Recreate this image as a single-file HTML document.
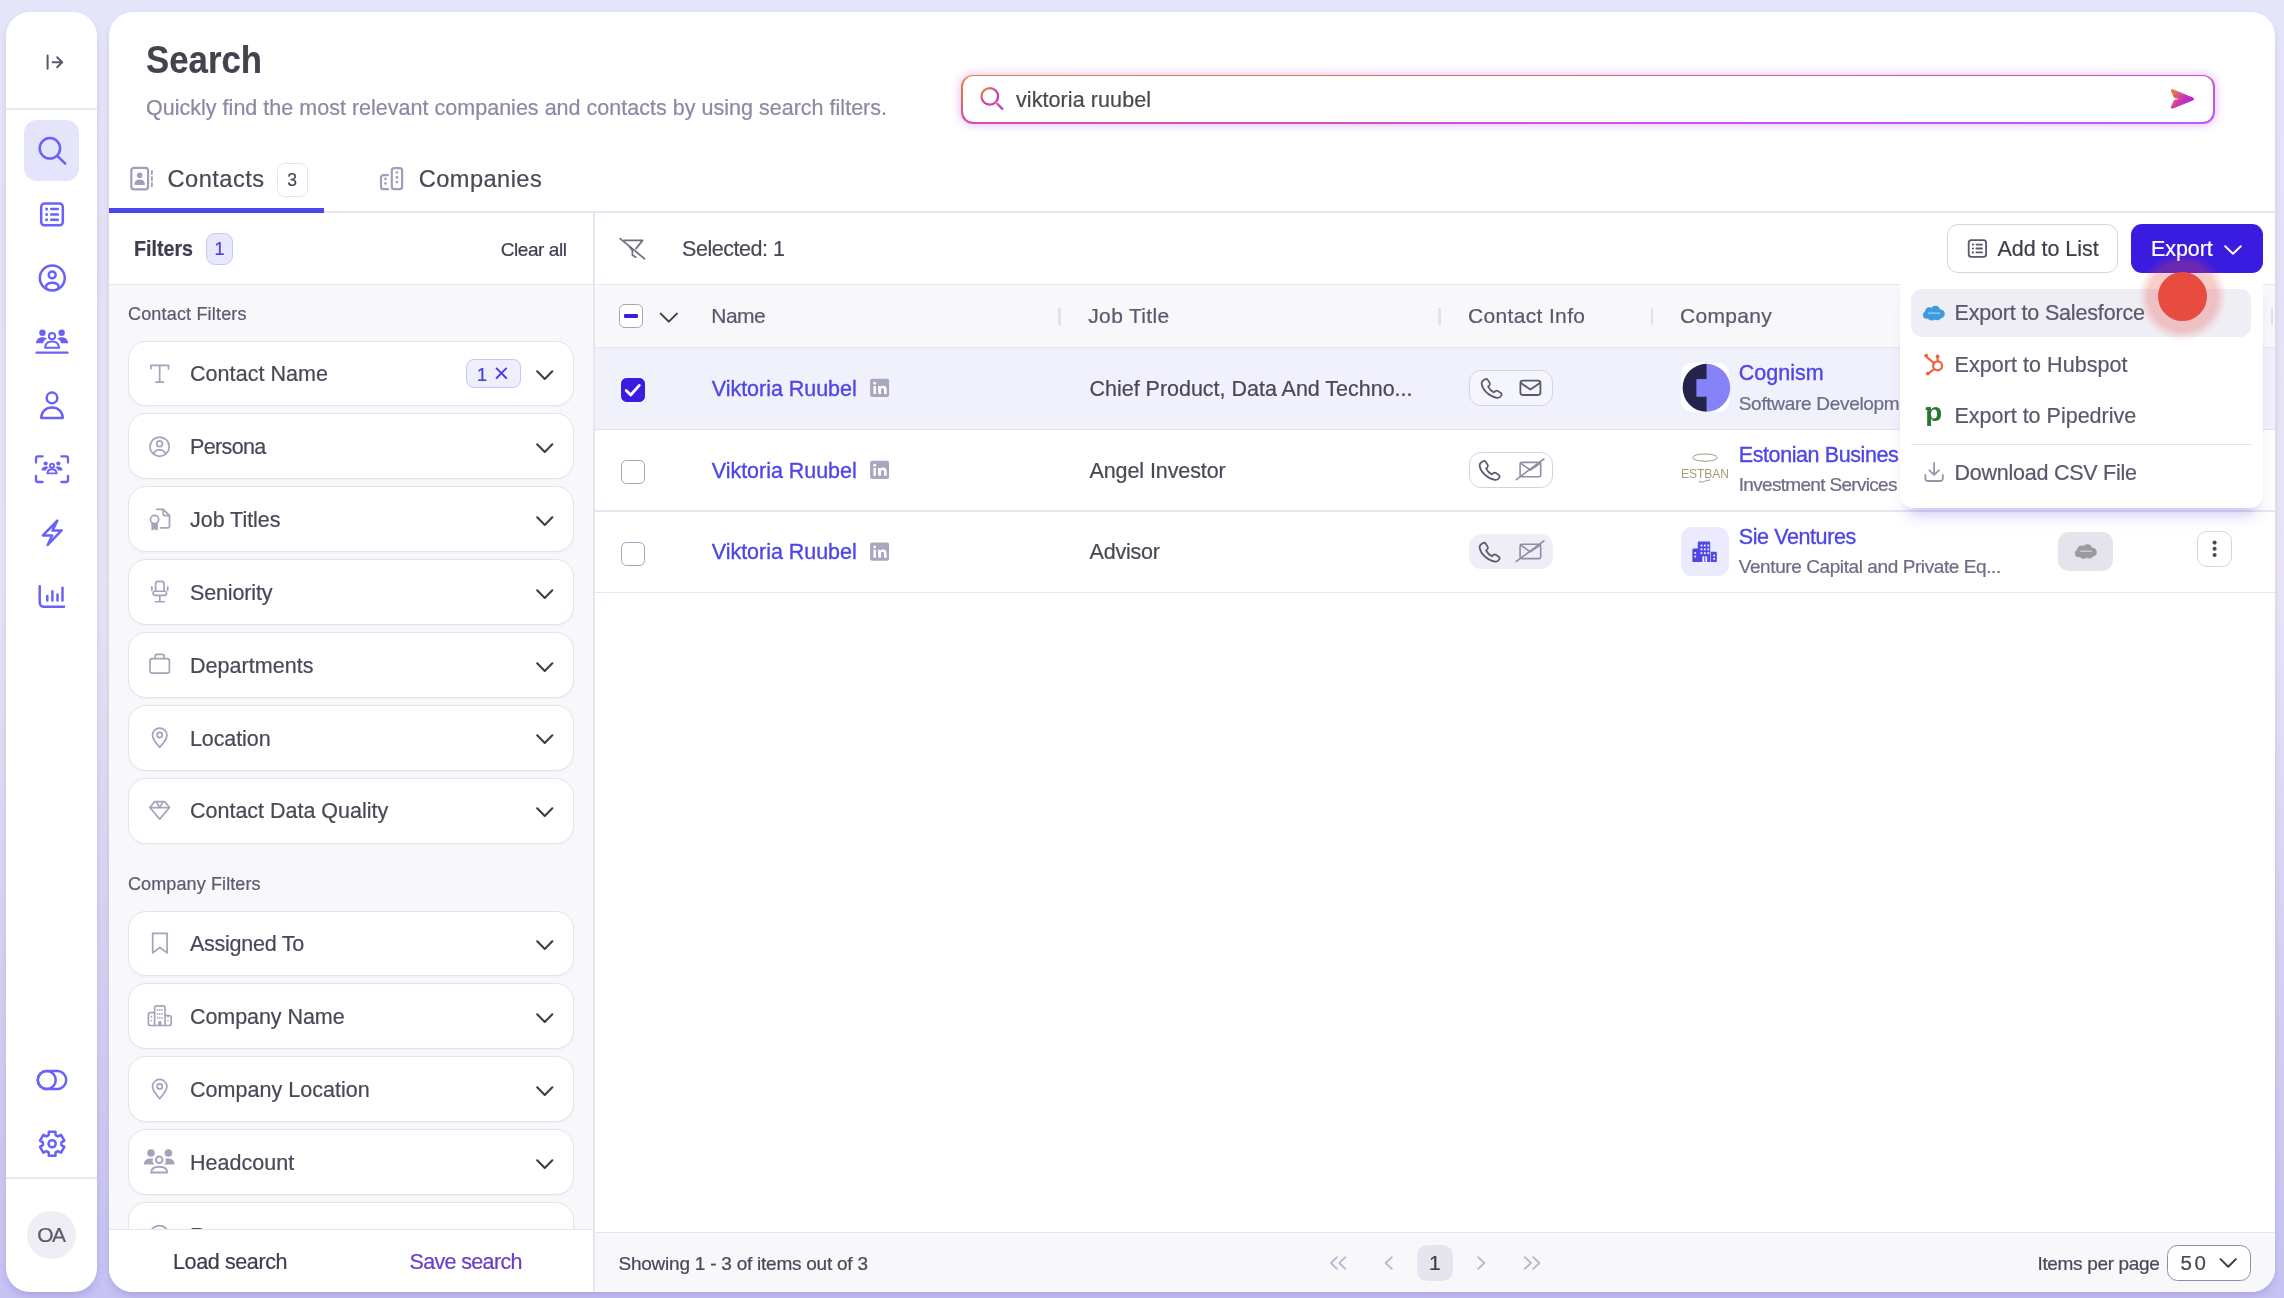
<!DOCTYPE html>
<html lang="en">
<head>
<meta charset="utf-8">
<title>Search</title>
<style>
*{box-sizing:border-box;margin:0;padding:0}
html,body{width:2284px;height:1298px;overflow:hidden}
body{position:relative;font-family:"Liberation Sans",sans-serif;
  background:linear-gradient(180deg,#e5e5f9 0%,#e6e3f4 20%,#eae5f5 45%,#dcd8f3 64%,#d0ccf1 83%,#c6c2f2 100%);}
.a{position:absolute}
.t{position:absolute;white-space:nowrap;line-height:1;z-index:5;-webkit-text-stroke:.22px currentColor}
.side{left:6px;top:11.5px;width:91px;height:1280.5px;background:#fff;border-radius:24px;box-shadow:0 5px 9px -2px rgba(70,60,160,.24)}
.main{left:109px;top:11.5px;width:2166.3px;height:1280.5px;background:#fff;border-radius:24px;overflow:hidden;box-shadow:0 5px 9px -2px rgba(70,60,160,.24)}
.hl{position:absolute;height:1.5px;background:#e6e5f0}
.vl{position:absolute;width:1.5px;background:#e6e5f0}
.card{position:absolute;left:128.25px;width:446px;height:65.75px;background:#fff;border:1.5px solid #e3e2ef;border-radius:18px;box-shadow:0 1px 2px rgba(120,110,200,.06)}
.ico{position:absolute;overflow:visible}
.chev{position:absolute;width:17.5px;height:10.75px}
.cb{position:absolute;width:24px;height:24px;border-radius:5.5px;border:1.6px solid #a3a1bd;background:#fff}
.pill{position:absolute;left:1468.75px;width:84.5px;height:35.5px;border-radius:12px;border:1.6px solid #d3d1e5}
.sep{position:absolute;width:2.5px;height:17.5px;top:307.5px;background:#e2e1ec;border-radius:1px}
svg{display:block}
</style>
</head>
<body>

<!-- ===== Sidebar ===== -->
<div class="a side"></div>
<div class="hl" style="left:6px;width:91px;top:108px;background:#e9e9f2"></div>
<div class="hl" style="left:6px;width:91px;top:1177px;background:#e9e9f2"></div>
<div class="a" style="left:24.3px;top:120.2px;width:54.7px;height:60.5px;border-radius:13px;background:#e4e4fb"></div>
<div class="a" style="left:27.2px;top:1210.6px;width:48.6px;height:48.2px;border-radius:50%;background:#efeef5"></div>
<svg class="a" style="left:0;top:0;z-index:2" width="110" height="1298" viewBox="0 0 110 1298"><g fill="none" stroke="#5a586c" stroke-width="2" stroke-linecap="round" stroke-linejoin="round"><path d="M47.6 55.6V68.8M52.6 62.2H62.2M57.2 57.2l5 5-5 5"/></g><g fill="none" stroke="#6a62f6" stroke-width="2.5" stroke-linecap="round" stroke-linejoin="round"><circle cx="49.9" cy="148.3" r="10.2"/><path d="M57.6 156.1L65.2 163.6"/><rect x="41.2" y="203.6" width="21.6" height="21.6" rx="3.2"/><path d="M51.2 209h6.6M51.2 214.4h6.6M51.2 219.8h6.6"/><clipPath id="pc"><circle cx="52.3" cy="278" r="13"/></clipPath><circle cx="52.3" cy="278" r="12.45"/><circle cx="52.2" cy="274.9" r="3.45"/><ellipse cx="52.3" cy="286.700" rx="6.400" ry="4" clip-path="url(#pc)"/><circle cx="52" cy="397.9" r="5.3"/><path d="M41.3 418c0-6.6 4.7-10.4 10.7-10.4s10.7 3.8 10.7 10.4z"/><path d="M57.3 520.6L42.9 535.4h9.2l-4.4 9.6 13.9-14.6h-9.1z"/><path d="M39.7 586.2v16.400a4.200 4.200 0 0 0 4.200 4.200h20.200"/><path d="M47.300 596v4.400M52.400 591.200v9.200M57.500 594.600v5.800M62.500 587.800v12.600"/><rect x="37.750" y="1070.950" width="28.500" height="18" rx="9"/><circle cx="46.750" cy="1079.950" r="9"/><path d="M48.80 1131.66 L55.50 1131.66 L55.58 1135.05 L57.97 1136.43 L60.95 1134.80 L64.30 1140.61 L61.40 1142.37 L61.40 1145.13 L64.30 1146.89 L60.95 1152.70 L57.97 1151.07 L55.58 1152.45 L55.50 1155.84 L48.80 1155.84 L48.72 1152.45 L46.33 1151.07 L43.35 1152.70 L40.00 1146.89 L42.90 1145.13 L42.90 1142.37 L40.00 1140.61 L43.35 1134.80 L46.33 1136.43 L48.72 1135.05Z"/><circle cx="52.15" cy="1143.75" r="3.6"/></g><g fill="#6a62f6"><circle cx="46.6" cy="209" r="1.5"/><circle cx="46.6" cy="214.4" r="1.5"/><circle cx="46.6" cy="219.8" r="1.5"/></g><circle cx="42.45" cy="332.80" r="3.20" fill="#6a62f6"/><circle cx="61.65" cy="332.80" r="3.20" fill="#6a62f6"/><path d="M35.85 343.20c0.60 -4.00 3.00 -6.00 6.60 -6.00c2.00 0 3.60 0.60 4.60 1.60c-2.20 0.90 -3.60 2.40 -4.20 4.40z" fill="#6a62f6"/><path d="M68.25 343.20c-0.60 -4.00 -3.00 -6.00 -6.60 -6.00c-2.00 0 -3.60 0.60 -4.60 1.60c2.20 0.90 3.60 2.40 4.20 4.40z" fill="#6a62f6"/><circle cx="52.05" cy="336.20" r="3.10" fill="none" stroke="#6a62f6" stroke-width="2.0"/><path d="M45.05 347.80c0.40 -4.40 3.20 -6.40 7.00 -6.40s6.60 2.00 7.00 6.40z" fill="none" stroke="#6a62f6" stroke-width="2.0" stroke-linejoin="round"/><path d="M36.45 352.60H67.65" stroke="#6a62f6" stroke-width="2.3" stroke-linecap="round"/><g fill="none" stroke="#6a62f6" stroke-width="2.3" stroke-linecap="round" stroke-linejoin="round"><path d="M36 462.6v-4.2a2 2 0 0 1 2-2h4.6M61.4 456.4H66a2 2 0 0 1 2 2v4.2M68 475.8v4.2a2 2 0 0 1-2 2h-4.6M42.6 482H38a2 2 0 0 1-2-2v-4.2"/></g><circle cx="45.66" cy="463.51" r="2.11" fill="#6a62f6"/><circle cx="58.34" cy="463.51" r="2.11" fill="#6a62f6"/><path d="M41.31 470.38c0.40 -2.64 1.98 -3.96 4.36 -3.96c1.32 0 2.38 0.40 3.04 1.06c-1.45 0.59 -2.38 1.58 -2.77 2.90z" fill="#6a62f6"/><path d="M62.69 470.38c-0.40 -2.64 -1.98 -3.96 -4.36 -3.96c-1.32 0 -2.38 0.40 -3.04 1.06c1.45 0.59 2.38 1.58 2.77 2.90z" fill="#6a62f6"/><circle cx="52.00" cy="465.76" r="2.05" fill="none" stroke="#6a62f6" stroke-width="1.9"/><path d="M47.38 473.41c0.26 -2.90 2.11 -4.22 4.62 -4.22s4.36 1.32 4.62 4.22z" fill="none" stroke="#6a62f6" stroke-width="1.9" stroke-linejoin="round"/></svg>

<!-- ===== Main panel ===== -->
<div class="a main">
  <!-- coordinates inside .main are page coords minus (109, 11.5) ; use wrapper to keep page coords -->
</div>
<div class="a" id="pg" style="left:0;top:0;width:2284px;height:1298px;will-change:transform;">

  <!-- filter pane bg -->
  <div class="a" style="left:109px;top:285px;width:484.5px;height:945px;background:#f8f8fb"></div>
  <!-- table header bg -->
  <div class="a" style="left:595px;top:285px;width:1680.3px;height:62.5px;background:#f8f8fb;border-top-left-radius:6px"></div>
  <!-- selected row bg -->
  <div class="a" style="left:595px;top:348px;width:1680.3px;height:81px;background:#f1f1fc"></div>
  <!-- table footer bg -->
  <div class="a" style="left:595px;top:1233px;width:1680.3px;height:59px;background:#f8f8fb;border-bottom-right-radius:24px;border-bottom-left-radius:6px"></div>

  <!-- lines -->
  <div class="hl" style="left:109px;width:2166.3px;top:211.2px"></div>
  <div class="a" style="left:109px;top:208.3px;width:214.7px;height:4.4px;background:#4b45ea"></div>
  <div class="hl" style="left:109px;width:2166.3px;top:283.8px"></div>
  <div class="vl" style="left:593.2px;top:212px;height:1080px"></div>
  <div class="hl" style="left:595px;width:1680.3px;top:346.8px"></div>
  <div class="hl" style="left:595px;width:1680.3px;top:428.6px;background:#e2e1f0"></div>
  <div class="hl" style="left:595px;width:1680.3px;top:510px"></div>
  <div class="hl" style="left:595px;width:1680.3px;top:591.8px"></div>
  <div class="hl" style="left:595px;width:1680.3px;top:1231.6px"></div>
  <div class="hl" style="left:109px;width:484.5px;top:1228.6px;z-index:4"></div>

  <!-- search box -->
  <div class="a" style="left:961px;top:74.6px;width:1253.8px;height:49px;border-radius:12px;padding:1.6px;
       background:linear-gradient(to bottom right,#ea8436 0%,#e0704f 22%,#cf4fb4 50%,#c656e2 75%,#c45cf8 100%);
       box-shadow:0 0 10px 1px rgba(200,110,248,.45)">
    <div style="width:100%;height:100%;background:#fff;border-radius:10.4px"></div>
  </div>

  <!-- tab badge -->
  <div class="a" style="left:276.5px;top:162.5px;width:31px;height:34px;border:1.8px solid #e4e3f0;border-radius:7.5px;background:#fff"></div>
  <!-- Filters badge -->
  <div class="a" style="left:205.5px;top:232.5px;width:27.8px;height:32px;border:1.5px solid #c9c7f6;border-radius:9px;background:#e8e8fd"></div>

  <!-- filter cards -->
  <div class="card" style="top:340.50px"></div><svg class="chev" style="left:536.2px;top:370.10px" viewBox="0 0 17.5 10.75"><path d="M1.2 1.3 L8.75 9 L16.3 1.3" fill="none" stroke="#3f3d4d" stroke-width="2.1" stroke-linecap="round" stroke-linejoin="round"/></svg><div class="card" style="top:413.38px"></div><svg class="chev" style="left:536.2px;top:442.98px" viewBox="0 0 17.5 10.75"><path d="M1.2 1.3 L8.75 9 L16.3 1.3" fill="none" stroke="#3f3d4d" stroke-width="2.1" stroke-linecap="round" stroke-linejoin="round"/></svg><div class="card" style="top:486.25px"></div><svg class="chev" style="left:536.2px;top:515.85px" viewBox="0 0 17.5 10.75"><path d="M1.2 1.3 L8.75 9 L16.3 1.3" fill="none" stroke="#3f3d4d" stroke-width="2.1" stroke-linecap="round" stroke-linejoin="round"/></svg><div class="card" style="top:559.12px"></div><svg class="chev" style="left:536.2px;top:588.73px" viewBox="0 0 17.5 10.75"><path d="M1.2 1.3 L8.75 9 L16.3 1.3" fill="none" stroke="#3f3d4d" stroke-width="2.1" stroke-linecap="round" stroke-linejoin="round"/></svg><div class="card" style="top:632.00px"></div><svg class="chev" style="left:536.2px;top:661.60px" viewBox="0 0 17.5 10.75"><path d="M1.2 1.3 L8.75 9 L16.3 1.3" fill="none" stroke="#3f3d4d" stroke-width="2.1" stroke-linecap="round" stroke-linejoin="round"/></svg><div class="card" style="top:704.88px"></div><svg class="chev" style="left:536.2px;top:734.48px" viewBox="0 0 17.5 10.75"><path d="M1.2 1.3 L8.75 9 L16.3 1.3" fill="none" stroke="#3f3d4d" stroke-width="2.1" stroke-linecap="round" stroke-linejoin="round"/></svg><div class="card" style="top:777.75px"></div><svg class="chev" style="left:536.2px;top:807.35px" viewBox="0 0 17.5 10.75"><path d="M1.2 1.3 L8.75 9 L16.3 1.3" fill="none" stroke="#3f3d4d" stroke-width="2.1" stroke-linecap="round" stroke-linejoin="round"/></svg><div class="card" style="top:910.50px"></div><svg class="chev" style="left:536.2px;top:940.10px" viewBox="0 0 17.5 10.75"><path d="M1.2 1.3 L8.75 9 L16.3 1.3" fill="none" stroke="#3f3d4d" stroke-width="2.1" stroke-linecap="round" stroke-linejoin="round"/></svg><div class="card" style="top:983.38px"></div><svg class="chev" style="left:536.2px;top:1012.98px" viewBox="0 0 17.5 10.75"><path d="M1.2 1.3 L8.75 9 L16.3 1.3" fill="none" stroke="#3f3d4d" stroke-width="2.1" stroke-linecap="round" stroke-linejoin="round"/></svg><div class="card" style="top:1056.25px"></div><svg class="chev" style="left:536.2px;top:1085.85px" viewBox="0 0 17.5 10.75"><path d="M1.2 1.3 L8.75 9 L16.3 1.3" fill="none" stroke="#3f3d4d" stroke-width="2.1" stroke-linecap="round" stroke-linejoin="round"/></svg><div class="card" style="top:1129.12px"></div><svg class="chev" style="left:536.2px;top:1158.72px" viewBox="0 0 17.5 10.75"><path d="M1.2 1.3 L8.75 9 L16.3 1.3" fill="none" stroke="#3f3d4d" stroke-width="2.1" stroke-linecap="round" stroke-linejoin="round"/></svg><div class="card" style="top:1202.00px"></div><svg class="chev" style="left:536.2px;top:1231.60px" viewBox="0 0 17.5 10.75"><path d="M1.2 1.3 L8.75 9 L16.3 1.3" fill="none" stroke="#3f3d4d" stroke-width="2.1" stroke-linecap="round" stroke-linejoin="round"/></svg>

  <div class="a" style="left:466.2px;top:358.7px;width:54.6px;height:29.6px;border:1.5px solid #c9c7f6;border-radius:8px;background:#eeeefc"></div>
  <!-- filter pane footer (white) -->
  <div class="a" style="left:109px;top:1230px;width:484.2px;height:62px;background:#fff;border-bottom-left-radius:24px;z-index:3"></div>

  <!-- toolbar buttons -->
  <div class="a" style="left:1947.4px;top:224.4px;width:170.6px;height:48.2px;border:1.6px solid #d6d4e6;border-radius:11px;background:#fff"></div>
  <div class="a" style="left:2130.7px;top:224px;width:132.4px;height:48.6px;border-radius:11px;background:#3a1be0"></div>

  <!-- header checkbox -->
  <div class="cb" style="left:619px;top:303.8px;border-color:#a5a3c0"></div>
  <div class="a" style="left:624.4px;top:314.1px;width:13.4px;height:3.5px;background:#3a1be0;border-radius:1.2px"></div>
  <!-- row checkboxes -->
  <div class="cb" style="left:620.5px;top:378.2px;background:#3a1be0;border-color:#3a1be0"></div>
  <div class="cb" style="left:620.5px;top:460px"></div>
  <div class="cb" style="left:620.5px;top:542px"></div>

  <!-- header separators -->
  <div class="sep" style="left:1058.3px"></div>
  <div class="sep" style="left:1438.2px"></div>
  <div class="sep" style="left:1650.6px"></div>
  <div class="sep" style="left:2270.6px"></div>

  <!-- contact pills -->
  <div class="pill" style="top:370.4px;background:#f5f5fd"></div>
  <div class="pill" style="top:452px;background:#fff"></div>
  <div class="pill" style="top:533.8px;background:#efeef6;border-color:#efeef6"></div>

  <!-- company logos -->
  <div class="a" style="left:1680.7px;top:363.2px;width:48.6px;height:49.2px;border-radius:11px;background:#fff"></div>
  <div class="a" style="left:1680.7px;top:527.4px;width:48.6px;height:48.4px;border-radius:11px;background:#ebeafe"></div>

  <!-- row 3 right: sf badge + kebab -->
  <div class="a" style="left:2058.4px;top:532.2px;width:54.5px;height:38.6px;border-radius:11px;background:#e5e4ec"></div>
  <div class="a" style="left:2196.7px;top:531px;width:35.8px;height:35.6px;border-radius:10px;border:1.6px solid #d4d3e4;background:#fff"></div>

  <!-- pagination -->
  <div class="a" style="left:1417px;top:1244.9px;width:35.8px;height:35.7px;border-radius:10.5px;background:#e6e5ee"></div>
  <div class="a" style="left:2166.5px;top:1245.1px;width:84.5px;height:35.8px;border-radius:10.5px;border:1.6px solid #8e8ca8;background:#fff"></div>

  <!-- dropdown -->
  <div class="a" style="left:1899.5px;top:275px;width:363.5px;height:232.7px;border-radius:10px 10px 13px 13px;background:#fff;z-index:20;
       box-shadow:0 14px 16px -8px rgba(88,78,220,.30),0 5px 6px -4px rgba(88,78,220,.12)"></div>
  <div class="a" style="left:1911.3px;top:288.5px;width:339.7px;height:48.5px;border-radius:11px;background:#efeef5;z-index:21"></div>
  <div class="hl" style="left:1911.3px;width:339.7px;top:443.6px;background:#e3e2f0;z-index:21"></div>

  <!-- red cursor dot -->
  <div class="a" style="left:2138px;top:252px;width:89px;height:89px;border-radius:50%;z-index:40;
       background:radial-gradient(circle,rgba(232,76,65,.30) 0,rgba(232,76,65,.28) 34px,rgba(232,76,65,.10) 40px,rgba(232,76,65,0) 44.5px)"></div>
  <div class="a" style="left:2158.1px;top:272px;width:49px;height:49px;border-radius:50%;background:#e84c41;z-index:41"></div>

  <svg class="a" style="left:0;top:0;z-index:2" width="2284" height="1298" viewBox="0 0 2284 1298"><g fill="none" stroke="#a09eb9" stroke-width="2.2" stroke-linecap="round" stroke-linejoin="round"><rect x="131.3" y="167.9" width="16.8" height="21.5" rx="2.8"/><rect x="391.8" y="168.2" width="10.3" height="21" rx="2.4"/><path d="M388 175.1h-4.600a2.400 2.400 0 0 0-2.400 2.400v9.300a2.400 2.400 0 0 0 2.400 2.400h4.600"/></g><path d="M151.9 170.8v3.400M151.900 176.900v3.400M151.900 183v3.400" stroke="#a09eb9" stroke-width="1.800" stroke-linecap="round" fill="none"/><g fill="#a09eb9"><circle cx="139.7" cy="175.3" r="2.800"/><path d="M134.400 184.200c.400-3.300 2.500-4.700 5.300-4.700s4.900 1.400 5.300 4.700c0 .5-.4.800-.9.800h-8.800c-.500 0-.900-.300-.900-.800z"/><circle cx="396.95" cy="172.5" r="1.35"/><circle cx="396.95" cy="177.3" r="1.35"/><circle cx="396.95" cy="182.1" r="1.35"/><circle cx="385.4" cy="178.9" r="1.3"/><circle cx="385.4" cy="183.4" r="1.3"/></g><g fill="none" stroke="#a5a3bc" stroke-width="1.7" stroke-linecap="round" stroke-linejoin="round"><path d="M150.9 368.8v-3.4h17.6v3.4M159.7 365.4v16.7M155.9 382.1h7.6"/><circle cx="159.6" cy="446.675" r="9.6"/><circle cx="159.6" cy="443.77500000000003" r="2.9"/><path d="M153.6 453.875c1-2.7 3.2-4 6-4s5 1.3 6 4"/><path d="M156.6 509.35h6.6l6.3 6.3v10.6a1.6 1.6 0 0 1-1.6 1.6h-7.3"/><path d="M163.2 509.35v4.7a1.6 1.6 0 0 0 1.6 1.6h4.7"/><circle cx="154.6" cy="519.55" r="4.1"/><path d="M152.2 523.15v6.4l2.4-1.5 2.4 1.5v-6.4" fill="#a5a3bc"/><path d="M155.6 590.625v-6.6a2.6 2.6 0 0 1 2.6-2.6h3.2a2.6 2.6 0 0 1 2.6 2.6v6.6"/><rect x="153.1" y="591.225" width="13.4" height="4.2" rx="2.1"/><path d="M151.9 586.725v3.6M167.7 586.725v3.6M159.8 595.725v5.2M155.4 601.725h8.8"/><rect x="150" y="658.6" width="19.4" height="14.6" rx="2.4"/><path d="M155.2 658.6v-2.2a2 2 0 0 1 2-2h5a2 2 0 0 1 2 2v2.2"/><path d="M159.7 747.325c-4.6-5-7.2-8.6-7.2-12.1a7.2 7.2 0 0 1 14.4 0c0 3.5-2.6 7.1-7.2 12.1z"/><circle cx="159.7" cy="735.0250000000001" r="2.6"/><path d="M159.7 1098.7c-4.6-5-7.2-8.6-7.2-12.1a7.2 7.2 0 0 1 14.4 0c0 3.5-2.6 7.1-7.2 12.1z"/><circle cx="159.7" cy="1086.4" r="2.6"/><path d="M154.6 801.65h10.2l4.7 5.9-9.8 11.6-9.8-11.6z"/><path d="M150.2 807.55h19M156.4 802.05l3.3 5.3 3.3-5.3"/><path d="M152.7 933.3h14.4v19.6l-7.2-5.4-7.2 5.4z"/><path d="M154.6 1025.475v-17.6a2 2 0 0 1 2-2h6.4a2 2 0 0 1 2 2v17.6"/><path d="M154.6 1012.675h-4.2a2 2 0 0 0-2 2v8.8a2 2 0 0 0 2 2h18.8a2 2 0 0 0 2-2v-6a2 2 0 0 0-2-2h-4.2"/></g><g fill="#a5a3bc"><circle cx="157.6" cy="1009.875" r=".85"/><circle cx="159.8" cy="1009.875" r=".85"/><circle cx="162.0" cy="1009.875" r=".85"/><circle cx="157.6" cy="1013.875" r=".85"/><circle cx="159.8" cy="1013.875" r=".85"/><circle cx="162.0" cy="1013.875" r=".85"/><circle cx="157.6" cy="1017.875" r=".85"/><circle cx="159.8" cy="1017.875" r=".85"/><circle cx="162.0" cy="1017.875" r=".85"/><circle cx="151.4" cy="1016.675" r=".85"/><circle cx="168" cy="1016.675" r=".85"/><circle cx="151.4" cy="1020.475" r=".85"/><circle cx="168" cy="1020.475" r=".85"/><rect x="158.2" y="1021.275" width="3.2" height="4.6"/></g><g transform="translate(0 -0.53)" fill="#a5a3bc"><circle cx="151" cy="1153.5" r="3.8"/><circle cx="168.4" cy="1153.5" r="3.8"/><path d="M143.9 1165C143.9 1161.2 146.6 1159.1 150.4 1159.1H153.6C152.8 1160.2 152.4 1161.400 152.800 1162.800C153.100 1163.800 153.800 1164.600 154.700 1165Z"/><path d="M174.6 1165C174.6 1161.2 171.9 1159.1 168.1 1159.1H164.9C165.7 1160.2 166.1 1161.4 165.7 1162.8C165.4 1163.8 164.7 1164.6 163.8 1165Z"/><circle cx="159.2" cy="1160.3" r="3.3" fill="none" stroke="#a5a3bc" stroke-width="2"/><path d="M151.2 1173c0-3.600 3.200-5.600 8-5.600s8 2 8 5.600z" fill="none" stroke="#a5a3bc" stroke-width="2" stroke-linejoin="round"/></g><circle cx="159.4" cy="1235.2" r="9.6" fill="none" stroke="#a5a3bc" stroke-width="1.7"/><path d="M496.6 368.4l9.6 9.6M506.2 368.4l-9.6 9.6" stroke="#4a40e0" stroke-width="1.9" stroke-linecap="round" fill="none"/><defs>
<linearGradient id="gs" x1="0" y1="0" x2="1" y2="1"><stop offset="0" stop-color="#ee8a3a"/><stop offset=".5" stop-color="#d6409a"/><stop offset="1" stop-color="#b43cf0"/></linearGradient>
<linearGradient id="ga" x1="0" y1="0" x2="1" y2=".6"><stop offset="0" stop-color="#ee8a30"/><stop offset=".55" stop-color="#cc3aa8"/><stop offset="1" stop-color="#b01ee4"/></linearGradient>
</defs><g fill="none" stroke="url(#gs)" stroke-width="2.3" stroke-linecap="round"><circle cx="989.8" cy="96.4" r="8.3"/><path d="M996 102.6l6.4 6.2"/></g><path d="M2172.6 89.6l20.6 8.6a.9.9 0 0 1 0 1.6l-20.6 8.4a1 1 0 0 1-1.3-1.3l3.1-6.6 8.2-1.3-8.2-1.4-3.1-6.7a1 1 0 0 1 1.3-1.3z" fill="url(#ga)" stroke="url(#ga)" stroke-width="1" stroke-linejoin="round"/><g fill="none" stroke="#6e6c85" stroke-width="1.7" stroke-linecap="round" stroke-linejoin="round"><path d="M624.2 240.4h18.4l-6.6 8.2M629.8 247.2l2.6 3.2v4.6l3.4 2.2"/><path d="M620.2 238.6l24.4 20.2"/></g><path d="M660.7 313.6l8.1 8 8.1-8" fill="none" stroke="#3f3d4d" stroke-width="2" stroke-linecap="round" stroke-linejoin="round"/><path d="M626.2 390.6l4.5 4.4 8.6-9.6" fill="none" stroke="#fff" stroke-width="2.8" stroke-linecap="round" stroke-linejoin="round"/><rect x="870.1" y="378.8" width="19" height="18.2" rx="2" fill="#a9a7bf"/><g fill="#fff"><circle cx="874.7" cy="383.3" r="1.45"/><rect x="873.4" y="386.0" width="2.6" height="7.9"/><path d="M877.9 386.0h2.5v1.1c.6-.9 1.6-1.4 2.9-1.4 2.4 0 3.3 1.5 3.3 3.9v4.3h-2.6v-3.9c0-1.1-.3-1.9-1.4-1.9-1.2 0-1.6.8-1.6 1.9v3.9h-2.6z"/></g><rect x="870.1" y="460.70000000000005" width="19" height="18.2" rx="2" fill="#a9a7bf"/><g fill="#fff"><circle cx="874.7" cy="465.20000000000005" r="1.45"/><rect x="873.4" y="467.90000000000003" width="2.6" height="7.9"/><path d="M877.9 467.90000000000003h2.5v1.1c.6-.9 1.6-1.4 2.9-1.4 2.4 0 3.3 1.5 3.3 3.9v4.3h-2.6v-3.9c0-1.1-.3-1.9-1.4-1.9-1.2 0-1.6.8-1.6 1.9v3.9h-2.6z"/></g><rect x="870.1" y="542.55" width="19" height="18.2" rx="2" fill="#a9a7bf"/><g fill="#fff"><circle cx="874.7" cy="547.05" r="1.45"/><rect x="873.4" y="549.75" width="2.6" height="7.9"/><path d="M877.9 549.75h2.5v1.1c.6-.9 1.6-1.4 2.9-1.4 2.4 0 3.3 1.5 3.3 3.9v4.3h-2.6v-3.9c0-1.1-.3-1.9-1.4-1.9-1.2 0-1.6.8-1.6 1.9v3.9h-2.6z"/></g><path transform="translate(1480.6 378.2) scale(1.0)" d="M4.4 1.1c.9-.5 2.1-.3 2.7.6l1.9 2.9c.5.8.4 1.8-.2 2.5l-1.3 1.4c1.3 2.5 3.3 4.5 5.8 5.8l1.4-1.3c.7-.6 1.7-.7 2.5-.2l2.9 1.9c.9.6 1.1 1.8.6 2.7-.9 1.6-2.7 2.5-4.500 2.200C8.500 18.300 2.100 11.900 1.000 5.600.700 3.800 2.800 2 4.400 1.100z" fill="none" stroke="#5a586c" stroke-width="1.7" stroke-linejoin="round"/><g fill="none" stroke="#5a586c" stroke-width="1.8" stroke-linejoin="round" stroke-linecap="round"><rect x="1520.4" y="380.6" width="20" height="14.4" rx="2.4"/><path d="M1521.2 383.20000000000005l9.2 6.4 9.2-6.4"/></g><path transform="translate(1478.6 460.2) scale(1.0)" d="M4.4 1.1c.9-.5 2.1-.3 2.7.6l1.9 2.9c.5.8.4 1.8-.2 2.5l-1.3 1.4c1.3 2.5 3.3 4.5 5.8 5.8l1.4-1.3c.7-.6 1.7-.7 2.5-.2l2.9 1.9c.9.6 1.1 1.8.6 2.7-.9 1.6-2.7 2.5-4.500 2.200C8.500 18.300 2.100 11.900 1.000 5.600.700 3.800 2.800 2 4.400 1.100z" fill="none" stroke="#5a586c" stroke-width="1.7" stroke-linejoin="round"/><g fill="none" stroke="#8f8da6" stroke-width="1.6" stroke-linejoin="round" stroke-linecap="round"><rect x="1520.1" y="462.4" width="20.6" height="14.4" rx="1.6"/><path d="M1520.7 463.4l9.7 6.6 9.7-6.6"/><path d="M1516.3 479.6L1543.9 459"/></g><path transform="translate(1478.6 542) scale(1.0)" d="M4.4 1.1c.9-.5 2.1-.3 2.7.6l1.9 2.9c.5.8.4 1.8-.2 2.5l-1.3 1.4c1.3 2.5 3.3 4.5 5.8 5.8l1.4-1.3c.7-.6 1.7-.7 2.5-.2l2.9 1.9c.9.6 1.1 1.8.6 2.7-.9 1.6-2.7 2.5-4.500 2.200C8.500 18.300 2.100 11.900 1.000 5.600.700 3.800 2.800 2 4.400 1.100z" fill="none" stroke="#5a586c" stroke-width="1.7" stroke-linejoin="round"/><g fill="none" stroke="#8f8da6" stroke-width="1.6" stroke-linejoin="round" stroke-linecap="round"><rect x="1520.1" y="544.1999999999999" width="20.6" height="14.4" rx="1.6"/><path d="M1520.7 545.1999999999999l9.7 6.6 9.7-6.6"/><path d="M1516.3 561.4L1543.9 540.8"/></g><path d="M1706.2 363.8A24 24 0 0 1 1706.2 411.8V396.40000000000003H1696V379.2H1706.2Z" fill="#8583f7"/><path d="M1706.6 363.8A24 24 0 0 0 1706.6 411.8V396.40000000000003H1696.4V379.2H1706.6Z" fill="#24234c"/><g fill="none" stroke="#a39c7c" stroke-width="1"><ellipse cx="1705" cy="457.6" rx="12.4" ry="3.6"/><path d="M1698.6 482.2c2-1.8 3.4 1 5.6-.6s3.200-.600 6.200-1.800"/></g><text x="1705" y="477.6" text-anchor="middle" font-family="Liberation Sans, sans-serif" font-size="12.6" fill="#a39c7c" textLength="48" lengthAdjust="spacingAndGlyphs">ESTBAN</text><g fill="#4f46e5"><path d="M1699.2 541.6h9.6a1.400 1.400 0 0 1 1.400 1.400V562h-12.400V543a1.400 1.400 0 0 1 1.400-1.400z"/><path d="M1693.8 548.6h4.6V562h-6v-12a1.400 1.400 0 0 1 1.400-1.400zM1710.800 551.8h4.600a1.400 1.400 0 0 1 1.400 1.400V562h-6z"/></g><g fill="#ebeafe"><rect x="1700.5" y="544.6" width="1.9" height="1.9"/><rect x="1703.9" y="544.6" width="1.9" height="1.9"/><rect x="1707.3" y="544.6" width="1.9" height="1.9"/><rect x="1700.5" y="548.4" width="1.9" height="1.9"/><rect x="1703.9" y="548.4" width="1.9" height="1.9"/><rect x="1707.3" y="548.4" width="1.9" height="1.9"/><rect x="1700.5" y="552.2" width="1.9" height="1.9"/><rect x="1703.9" y="552.2" width="1.9" height="1.9"/><rect x="1707.3" y="552.2" width="1.9" height="1.9"/><rect x="1694.300" y="552" width="1.8" height="1.8"/><rect x="1694.300" y="555.6" width="1.8" height="1.8"/><rect x="1713.2" y="554.6" width="1.800" height="1.800"/><rect x="1713.2" y="558" width="1.800" height="1.800"/><rect x="1702.400" y="556.400" width="4.800" height="5.600"/></g><rect x="1704.3" y="556.4" width="1" height="5.6" fill="#4f46e5"/><g transform="translate(2086 551.6) scale(1.0)" fill="#9b9b9f"><circle cx="-4.600" cy="-1.600" r="4.400"/><circle cx="1.400" cy="-2.600" r="4.800"/><circle cx="6.400" cy=".600" r="4.400"/><circle cx="-7.200" cy="1.800" r="3.800"/><circle cx="-2.400" cy="3.200" r="4.000"/><circle cx="3.200" cy="3.000" r="4.000"/><rect x="-7" y="-2" width="14" height="6"/></g><rect x="2079.6" y="550.6" width="12.6" height="1.3" fill="#c9c9cd" rx=".6"/><circle cx="2214.6" cy="542.6" r="2.05" fill="#4a4858"/><circle cx="2214.6" cy="548.8" r="2.05" fill="#4a4858"/><circle cx="2214.6" cy="555" r="2.05" fill="#4a4858"/><g fill="none" stroke="#5a586c" stroke-width="1.8" stroke-linecap="round" stroke-linejoin="round"><rect x="1968.7" y="240.1" width="17.4" height="16.8" rx="2.6"/><path d="M1976.4 244.6h5.6M1976.4 248.5h5.6M1976.4 252.4h5.600"/></g><g fill="#5a586c"><circle cx="1972.9" cy="244.6" r="1.1"/><circle cx="1972.9" cy="248.5" r="1.1"/><circle cx="1972.9" cy="252.4" r="1.1"/></g><path d="M2225.2 246.200l7.800 7.600 7.800-7.600" fill="none" stroke="#fff" stroke-width="2" stroke-linecap="round" stroke-linejoin="round"/><g fill="none" stroke="#b9b7cd" stroke-width="1.800" stroke-linecap="round" stroke-linejoin="round"><path d="M1337 1257.2l-6.200 5.800 6.200 5.800M1345.400 1257.200l-6.200 5.800 6.200 5.800"/><path d="M1391.800 1257.200l-6.200 5.800 6.200 5.800"/><path d="M1478.200 1257.200l6.200 5.800-6.200 5.800"/><path d="M1524.800 1257.200l6.200 5.800-6.200 5.800M1533.200 1257.200l6.200 5.800-6.200 5.800"/></g><path d="M2220.500 1259.100l7.700 7.700 7.700-7.700" fill="none" stroke="#3f3d4d" stroke-width="2" stroke-linecap="round" stroke-linejoin="round"/></svg><svg class="a" style="left:0;top:0;z-index:25" width="2284" height="1298" viewBox="0 0 2284 1298"><g transform="translate(1934 313.2) scale(1.0)" fill="#3d9be0"><circle cx="-4.600" cy="-1.600" r="4.400"/><circle cx="1.400" cy="-2.600" r="4.800"/><circle cx="6.400" cy=".600" r="4.400"/><circle cx="-7.200" cy="1.800" r="3.800"/><circle cx="-2.400" cy="3.200" r="4.000"/><circle cx="3.200" cy="3.000" r="4.000"/><rect x="-7" y="-2" width="14" height="6"/></g><rect x="1927.600" y="312.400" width="12.600" height="1.300" fill="#9fd0f2" rx=".6"/><g fill="none" stroke="#f0623a" stroke-width="2.2" stroke-linecap="round"><circle cx="1937.600" cy="365.800" r="4.500"/><path d="M1937.600 361.300v-4.200M1934 363.200l-7.400-6.200M1934.200 369l-5.600 4.400"/></g><g fill="#f0623a"><circle cx="1937.600" cy="356.400" r="1.900"/><circle cx="1926.200" cy="355.600" r="1.900"/><circle cx="1927.800" cy="373.600" r="1.900"/></g><text x="1925.200" y="421.400" font-family="Liberation Sans, sans-serif" font-weight="700" font-size="25" fill="#26792f" textLength="17" lengthAdjust="spacingAndGlyphs">p</text><rect x="1925.7" y="407.4" width="4" height="2.600" fill="#26792f"/><g fill="none" stroke="#9794ad" stroke-width="1.8" stroke-linecap="round" stroke-linejoin="round"><path d="M1934.100 462.900v11.800M1929.300 470.300l4.800 4.600 4.800-4.600"/><path d="M1925.400 474.800v3.800a2.400 2.400 0 0 0 2.400 2.400h12.600a2.400 2.400 0 0 0 2.400-2.400v-3.800"/></g></svg>

<div class="t" style="left:145.50px;top:40.00px;font-size:39px;color:#44424f;font-weight:700;transform:scaleX(0.8917);transform-origin:0 50%;">Search</div>
<div class="t" style="left:146.00px;top:98.00px;font-size:21.5px;color:#8b89a3;letter-spacing:0.017px;">Quickly find the most relevant companies and contacts by using search filters.</div>
<div class="t" style="left:1016.00px;top:90.00px;font-size:21.5px;color:#4a4a4a;letter-spacing:0.083px;">viktoria ruubel</div>
<div class="t" style="left:167.50px;top:168.00px;font-size:23.6px;color:#4a4858;letter-spacing:0.484px;">Contacts</div>
<div class="t" style="left:292.00px;top:172.00px;font-size:17.5px;color:#4a4858;transform:translateX(-50%);">3</div>
<div class="t" style="left:418.75px;top:168.00px;font-size:23.6px;color:#4a4858;letter-spacing:0.457px;">Companies</div>
<div class="t" style="left:134.25px;top:238.00px;font-size:21.8px;color:#3f3d4d;font-weight:700;transform:scaleX(0.9011);transform-origin:0 50%;">Filters</div>
<div class="t" style="left:219.40px;top:240.00px;font-size:18px;color:#4a40e0;transform:translateX(-50%);">1</div>
<div class="t" style="left:500.75px;top:240.00px;font-size:19px;color:#3f3d4d;letter-spacing:-0.432px;">Clear all</div>
<div class="t" style="left:128.00px;top:305.00px;font-size:18px;color:#5c5a6e;letter-spacing:0.175px;">Contact Filters</div>
<div class="t" style="left:128.00px;top:875.00px;font-size:18px;color:#5c5a6e;letter-spacing:0.111px;">Company Filters</div>
<div class="t" style="left:190.00px;top:364.00px;font-size:21.5px;color:#4a4858;letter-spacing:0.053px;">Contact Name</div>
<div class="t" style="left:190.00px;top:437.00px;font-size:21.5px;color:#4a4858;letter-spacing:-0.641px;">Persona</div>
<div class="t" style="left:190.00px;top:510.00px;font-size:21.5px;color:#4a4858;letter-spacing:-0.036px;">Job Titles</div>
<div class="t" style="left:190.00px;top:583.00px;font-size:21.5px;color:#4a4858;letter-spacing:-0.145px;">Seniority</div>
<div class="t" style="left:190.00px;top:656.00px;font-size:21.5px;color:#4a4858;letter-spacing:0.031px;">Departments</div>
<div class="t" style="left:190.00px;top:729.00px;font-size:21.5px;color:#4a4858;letter-spacing:-0.100px;">Location</div>
<div class="t" style="left:190.00px;top:801.00px;font-size:21.5px;color:#4a4858;letter-spacing:-0.009px;">Contact Data Quality</div>
<div class="t" style="left:190.00px;top:934.00px;font-size:21.5px;color:#4a4858;letter-spacing:-0.255px;">Assigned To</div>
<div class="t" style="left:190.00px;top:1007.00px;font-size:21.5px;color:#4a4858;letter-spacing:-0.068px;">Company Name</div>
<div class="t" style="left:190.00px;top:1080.00px;font-size:21.5px;color:#4a4858;letter-spacing:0.035px;">Company Location</div>
<div class="t" style="left:190.00px;top:1153.00px;font-size:21.5px;color:#4a4858;letter-spacing:0.025px;">Headcount</div>
<div class="t" style="left:477.00px;top:366.00px;font-size:18px;color:#4a40e0;">1</div>
<div class="t" style="left:173.00px;top:1252.00px;font-size:21.5px;color:#3f3d4d;letter-spacing:-0.384px;">Load search</div>
<div class="t" style="left:409.50px;top:1252.00px;font-size:21.5px;color:#6b3fc4;letter-spacing:-0.652px;">Save search</div>
<div class="t" style="left:682.00px;top:239.00px;font-size:21.5px;color:#4a4858;letter-spacing:-0.458px;">Selected: 1</div>
<div class="t" style="left:1997.50px;top:239.00px;font-size:21.5px;color:#3f3d4d;letter-spacing:-0.039px;">Add to List</div>
<div class="t" style="left:2151.00px;top:239.00px;font-size:21.5px;color:#ffffff;letter-spacing:-0.088px;">Export</div>
<div class="t" style="left:711.25px;top:305.00px;font-size:21px;color:#5a586c;letter-spacing:-0.510px;">Name</div>
<div class="t" style="left:1088.25px;top:305.00px;font-size:21px;color:#5a586c;letter-spacing:0.348px;">Job Title</div>
<div class="t" style="left:1468.00px;top:305.00px;font-size:21px;color:#5a586c;letter-spacing:0.342px;">Contact Info</div>
<div class="t" style="left:1680.00px;top:305.00px;font-size:21px;color:#5a586c;letter-spacing:0.310px;">Company</div>
<div class="t" style="left:711.75px;top:379.00px;font-size:21.5px;color:#4f46e5;letter-spacing:-0.030px;-webkit-text-stroke:0.35px #4f46e5;">Viktoria Ruubel</div>
<div class="t" style="left:711.75px;top:461.00px;font-size:21.5px;color:#4f46e5;letter-spacing:-0.030px;-webkit-text-stroke:0.35px #4f46e5;">Viktoria Ruubel</div>
<div class="t" style="left:711.75px;top:542.00px;font-size:21.5px;color:#4f46e5;letter-spacing:-0.030px;-webkit-text-stroke:0.35px #4f46e5;">Viktoria Ruubel</div>
<div class="t" style="left:1089.50px;top:379.00px;font-size:21.5px;color:#4a4858;letter-spacing:-0.016px;">Chief Product, Data And Techno...</div>
<div class="t" style="left:1089.50px;top:461.00px;font-size:21.5px;color:#4a4858;letter-spacing:-0.093px;">Angel Investor</div>
<div class="t" style="left:1089.50px;top:542.00px;font-size:21.5px;color:#4a4858;letter-spacing:-0.201px;">Advisor</div>
<div class="t" style="left:1738.75px;top:363.00px;font-size:21.5px;color:#4f46e5;letter-spacing:0.026px;-webkit-text-stroke:0.35px #4f46e5;">Cognism</div>
<div class="t" style="left:1738.75px;top:394.00px;font-size:19px;color:#6e6c85;letter-spacing:-0.303px;">Software Development</div>
<div class="t" style="left:1738.75px;top:445.00px;font-size:21.5px;color:#4f46e5;letter-spacing:-0.409px;-webkit-text-stroke:0.35px #4f46e5;width:160.4px;overflow:hidden;height:28px;">Estonian Business</div>
<div class="t" style="left:1738.75px;top:475.00px;font-size:19px;color:#6e6c85;letter-spacing:-0.685px;">Investment Services</div>
<div class="t" style="left:1738.75px;top:527.00px;font-size:21.5px;color:#4f46e5;letter-spacing:-0.402px;-webkit-text-stroke:0.35px #4f46e5;">Sie Ventures</div>
<div class="t" style="left:1738.75px;top:557.00px;font-size:19px;color:#6e6c85;letter-spacing:-0.412px;">Venture Capital and Private Eq...</div>
<div class="t" style="left:1954.50px;top:303.00px;font-size:21.5px;color:#5a586c;letter-spacing:-0.164px;z-index:30;">Export to Salesforce</div>
<div class="t" style="left:1954.50px;top:355.00px;font-size:21.5px;color:#5a586c;letter-spacing:0.056px;z-index:30;">Export to Hubspot</div>
<div class="t" style="left:1954.50px;top:406.00px;font-size:21.5px;color:#5a586c;letter-spacing:0.005px;z-index:30;">Export to Pipedrive</div>
<div class="t" style="left:1954.50px;top:463.00px;font-size:21.5px;color:#5a586c;letter-spacing:-0.245px;z-index:30;">Download CSV File</div>
<div class="t" style="left:618.50px;top:1254.00px;font-size:19px;color:#4a4858;letter-spacing:-0.238px;">Showing 1 - 3 of items out of 3</div>
<div class="t" style="left:2037.50px;top:1254.00px;font-size:19px;color:#4a4858;letter-spacing:-0.342px;">Items per page</div>
<div class="t" style="left:2180.40px;top:1253.00px;font-size:20.5px;color:#4a4858;letter-spacing:2.787px;">50</div>
<div class="t" style="left:1434.90px;top:1252.00px;font-size:21px;color:#3f3d4d;transform:translateX(-50%);">1</div>
<div class="t" style="left:37.20px;top:1224.00px;font-size:21px;color:#5a586c;letter-spacing:-1.544px;">OA</div>
<div class="t" style="left:190.00px;top:1226.00px;font-size:21.5px;color:#4a4858;letter-spacing:-2.013px;z-index:1;">Revenue</div>
</div>
</body>
</html>
